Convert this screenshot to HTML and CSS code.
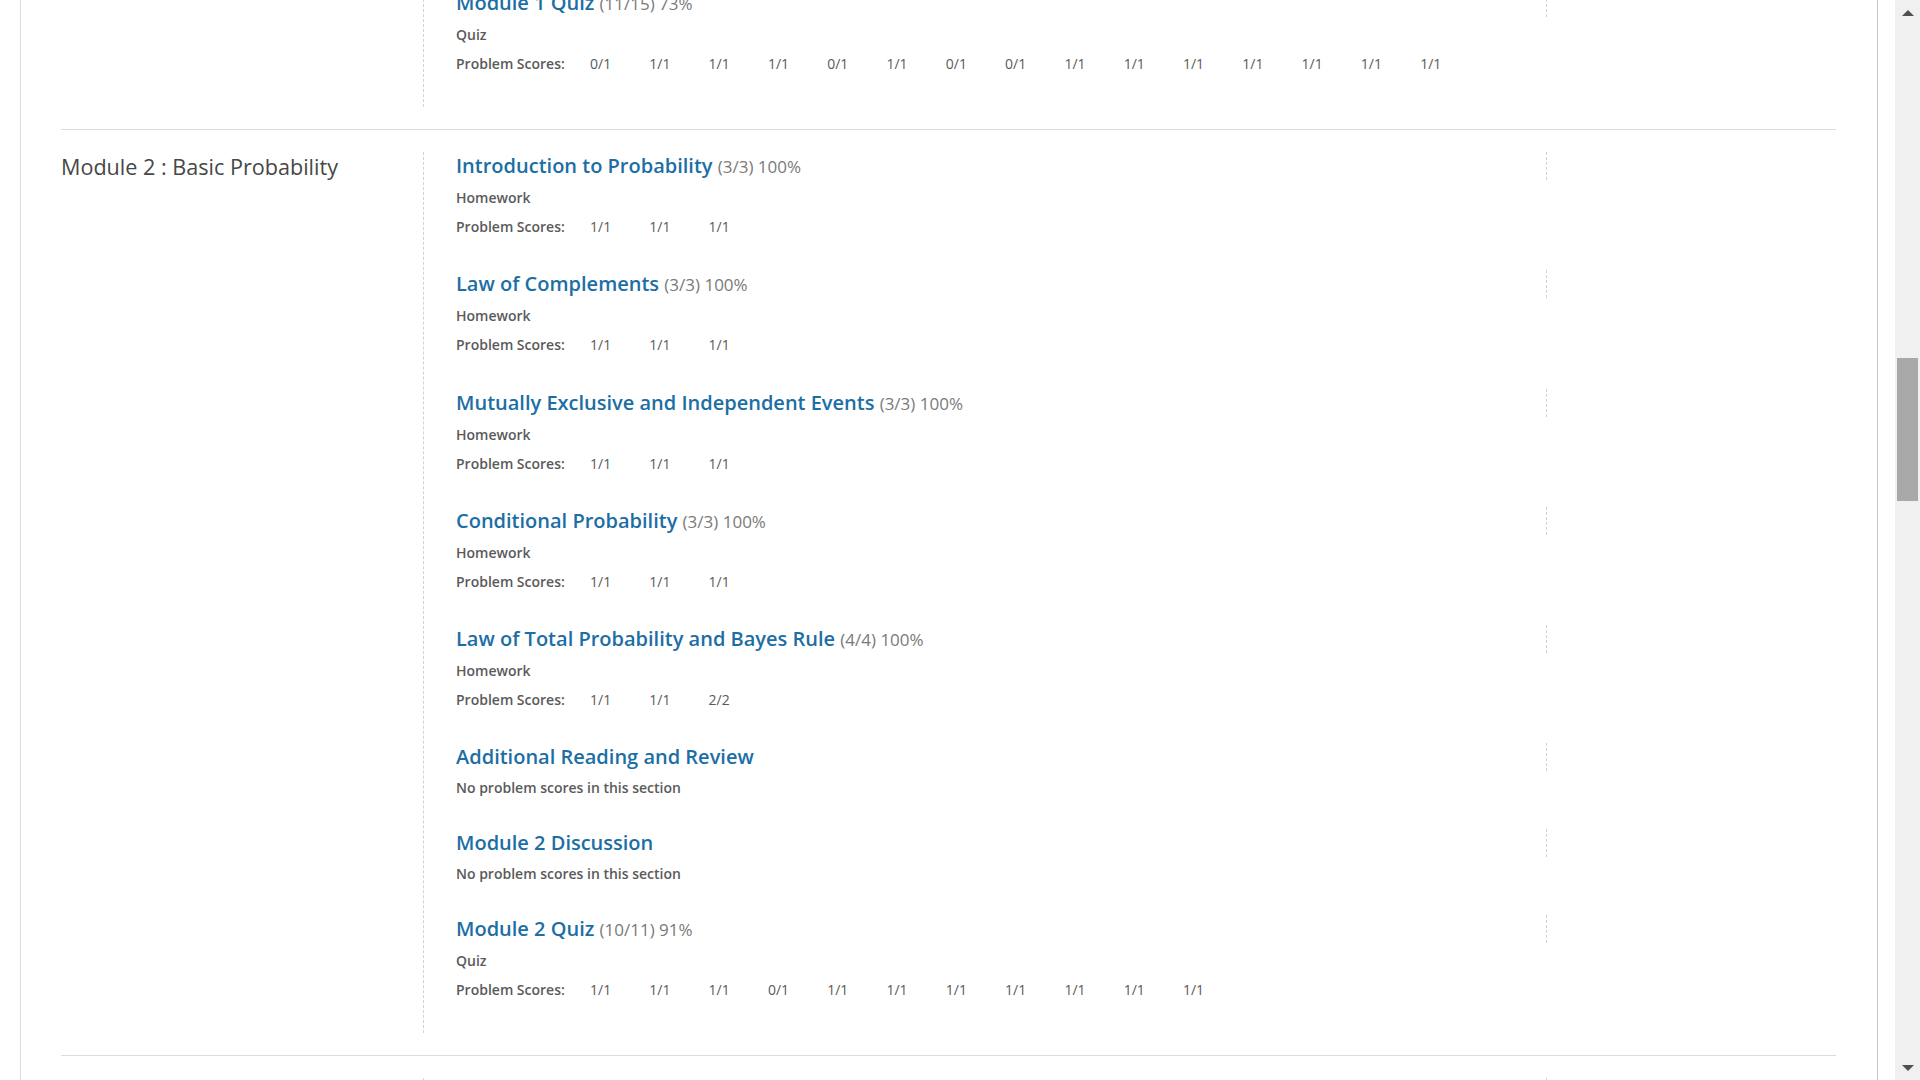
FILE: index.html
```html
<!DOCTYPE html>
<html lang="en">
<head>
<meta charset="utf-8">
<title>Progress</title>
<link rel="stylesheet" href="styles.css">
</head>
<body>
<div class="window">
  <div class="viewport">
    <div class="page">

      <section class="module">
        <div class="module-name"></div>
        <div class="items">
          <div class="item">
            <div class="item-head">
              <h3 class="item-title"><a class="item-link">Module 1 Quiz</a> <span class="pct">(11/15) 73%</span></h3>
              <div class="status"></div>
            </div>
            <div class="item-type">Quiz</div>
            <div class="scores">
              <span class="label">Problem Scores:</span>
              <span class="score">0/1</span><span class="score">1/1</span><span class="score">1/1</span><span class="score">1/1</span><span class="score">0/1</span><span class="score">1/1</span><span class="score">0/1</span><span class="score">0/1</span><span class="score">1/1</span><span class="score">1/1</span><span class="score">1/1</span><span class="score">1/1</span><span class="score">1/1</span><span class="score">1/1</span><span class="score">1/1</span>
            </div>
          </div>
        </div>
      </section>

      <section class="module">
        <div class="module-name"><h2 class="module-heading">Module 2 : Basic Probability</h2></div>
        <div class="items">
          <div class="item">
            <div class="item-head">
              <h3 class="item-title"><a class="item-link">Introduction to Probability</a> <span class="pct">(3/3) 100%</span></h3>
              <div class="status"></div>
            </div>
            <div class="item-type">Homework</div>
            <div class="scores"><span class="label">Problem Scores:</span><span class="score">1/1</span><span class="score">1/1</span><span class="score">1/1</span></div>
          </div>

          <div class="item">
            <div class="item-head">
              <h3 class="item-title"><a class="item-link">Law of Complements</a> <span class="pct">(3/3) 100%</span></h3>
              <div class="status"></div>
            </div>
            <div class="item-type">Homework</div>
            <div class="scores"><span class="label">Problem Scores:</span><span class="score">1/1</span><span class="score">1/1</span><span class="score">1/1</span></div>
          </div>

          <div class="item">
            <div class="item-head">
              <h3 class="item-title"><a class="item-link">Mutually Exclusive and Independent Events</a> <span class="pct">(3/3) 100%</span></h3>
              <div class="status"></div>
            </div>
            <div class="item-type">Homework</div>
            <div class="scores"><span class="label">Problem Scores:</span><span class="score">1/1</span><span class="score">1/1</span><span class="score">1/1</span></div>
          </div>

          <div class="item">
            <div class="item-head">
              <h3 class="item-title"><a class="item-link">Conditional Probability</a> <span class="pct">(3/3) 100%</span></h3>
              <div class="status"></div>
            </div>
            <div class="item-type">Homework</div>
            <div class="scores"><span class="label">Problem Scores:</span><span class="score">1/1</span><span class="score">1/1</span><span class="score">1/1</span></div>
          </div>

          <div class="item">
            <div class="item-head">
              <h3 class="item-title"><a class="item-link">Law of Total Probability and Bayes Rule</a> <span class="pct">(4/4) 100%</span></h3>
              <div class="status"></div>
            </div>
            <div class="item-type">Homework</div>
            <div class="scores"><span class="label">Problem Scores:</span><span class="score">1/1</span><span class="score">1/1</span><span class="score">2/2</span></div>
          </div>

          <div class="item item-empty">
            <div class="item-head">
              <h3 class="item-title"><a class="item-link">Additional Reading and Review</a></h3>
              <div class="status"></div>
            </div>
            <div class="no-scores">No problem scores in this section</div>
          </div>

          <div class="item item-empty">
            <div class="item-head">
              <h3 class="item-title"><a class="item-link">Module 2 Discussion</a></h3>
              <div class="status"></div>
            </div>
            <div class="no-scores">No problem scores in this section</div>
          </div>

          <div class="item">
            <div class="item-head">
              <h3 class="item-title"><a class="item-link">Module 2 Quiz</a> <span class="pct">(10/11) 91%</span></h3>
              <div class="status"></div>
            </div>
            <div class="item-type">Quiz</div>
            <div class="scores">
              <span class="label">Problem Scores:</span>
              <span class="score">1/1</span><span class="score">1/1</span><span class="score">1/1</span><span class="score">0/1</span><span class="score">1/1</span><span class="score">1/1</span><span class="score">1/1</span><span class="score">1/1</span><span class="score">1/1</span><span class="score">1/1</span><span class="score">1/1</span>
            </div>
          </div>
        </div>
      </section>

      <section class="module">
        <div class="module-name"></div>
        <div class="items">
          <div class="item">
            <div class="item-head">
              <h3 class="item-title">&nbsp;</h3>
              <div class="status"></div>
            </div>
          </div>
        </div>
      </section>

    </div>
  </div>
  <div class="scrollbar">
    <div class="sb-btn"><span class="arrow-up"></span></div>
    <div class="sb-track"><div class="sb-thumb"></div></div>
    <div class="sb-btn"><span class="arrow-down"></span></div>
  </div>
</div>
</body>
</html>
```

FILE: styles.css
```css
* { box-sizing: border-box; }

html, body {
  margin: 0;
  padding: 0;
  height: 100%;
  overflow: hidden;
  background: #ffffff;
  font-family: "Open Sans", "Noto Sans", sans-serif;
}

.window {
  display: flex;
  height: 100vh;
  overflow: hidden;
}

.viewport {
  flex: 1;
  overflow: hidden;
}

.page {
  margin: -33px 17px 0 20px;
  border-left: 1px solid #dcdcdc;
  border-right: 1px solid #c6c6c6;
  padding: 0 41px 0 40px;
  min-height: 1200px;
}

.module {
  display: flex;
  padding: 22px 0;
  border-bottom: 1px solid #dddddd;
}

.module-name {
  width: 362px;
  flex: none;
}

.module-heading {
  margin: 0;
  font-size: 21.6px;
  line-height: 30px;
  font-weight: 400;
  color: #474747;
}

.items {
  flex: 1;
  border-left: 1px dashed #d2d2d2;
  padding-left: 32px;
}

.item {
  padding-bottom: 33.2px;
}

.item-empty {
  padding-bottom: 31px;
}

.item-head {
  display: flex;
  height: 28px;
}

.item-title {
  flex: 1;
  margin: 0;
  font-size: 20px;
  line-height: 28px;
  font-weight: 600;
  white-space: nowrap;
}

.item-link {
  color: #1c6ea4;
  text-decoration: none;
}

.pct {
  font-size: 17px;
  font-weight: 400;
  color: #7a7a7a;
}

.status {
  width: 290px;
  flex: none;
  border-left: 1px dashed #d2d2d2;
}

.item-type {
  margin-top: 8px;
  font-size: 14px;
  line-height: 20px;
  font-weight: 600;
  color: #5a5a5a;
}

.no-scores {
  margin-top: 7px;
  font-size: 14px;
  line-height: 20px;
  font-weight: 600;
  color: #5a5a5a;
}

.scores {
  display: flex;
  margin-top: 9px;
  font-size: 14px;
  line-height: 20px;
  color: #5a5a5a;
  white-space: nowrap;
}

.label {
  width: 134px;
  flex: none;
  font-weight: 600;
}

.score {
  width: 59.3px;
  flex: none;
  font-weight: 400;
}

/* fake window scrollbar */
.scrollbar {
  width: 25px;
  flex: none;
  background: #f0f0f0;
  display: flex;
  flex-direction: column;
}

.sb-btn {
  height: 25px;
  flex: none;
  display: flex;
  align-items: center;
  justify-content: center;
}

.arrow-up {
  width: 0;
  height: 0;
  border-left: 6px solid transparent;
  border-right: 6px solid transparent;
  border-bottom: 6px solid #505050;
  margin-top: 1px;
}

.arrow-down {
  width: 0;
  height: 0;
  border-left: 6px solid transparent;
  border-right: 6px solid transparent;
  border-top: 6px solid #505050;
}

.sb-track {
  flex: 1;
}

.sb-thumb {
  margin-top: 333px;
  margin-left: 2px;
  width: 21px;
  height: 143px;
  background: #a8a8a8;
}
```
